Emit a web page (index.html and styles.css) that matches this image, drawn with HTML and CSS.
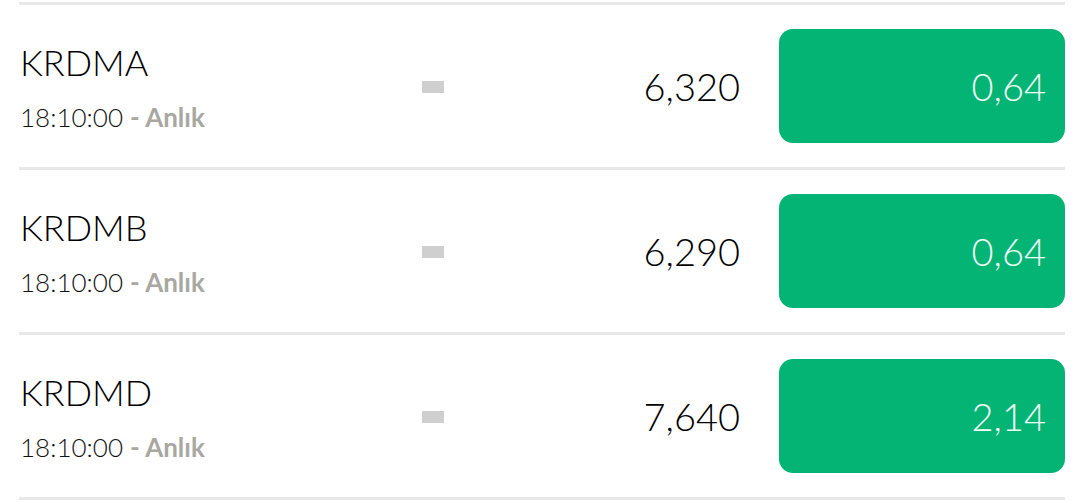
FILE: index.html
```html
<!DOCTYPE html>
<html lang="tr">
<head>
    <meta charset="UTF-8">
    <meta name="viewport" content="width=device-width, initial-scale=1.0">
    <title>Hisseler</title>
    <link rel="stylesheet" href="styles.css">
</head>
<body>
    <div class="liste">
        <div class="satir">
            <div class="bilgi">
                <div class="kod">KRDMA</div>
                <div class="zaman">18:10:00 <span class="tip">- Anlık</span></div>
            </div>
            <div class="degisim-yok"></div>
            <div class="fiyat">6,320</div>
            <div class="kutu yukari">0,64</div>
        </div>

        <div class="satir">
            <div class="bilgi">
                <div class="kod">KRDMB</div>
                <div class="zaman">18:10:00 <span class="tip">- Anlık</span></div>
            </div>
            <div class="degisim-yok"></div>
            <div class="fiyat">6,290</div>
            <div class="kutu yukari">0,64</div>
        </div>

        <div class="satir">
            <div class="bilgi">
                <div class="kod">KRDMD</div>
                <div class="zaman">18:10:00 <span class="tip">- Anlık</span></div>
            </div>
            <div class="degisim-yok"></div>
            <div class="fiyat">7,640</div>
            <div class="kutu yukari">2,14</div>
        </div>
    </div>
</body>
</html>
```

FILE: styles.css
```css
body {
    margin: 0;
    padding-top: 2px;
    background: #ffffff;
    font-family: Lato, "Noto Sans", sans-serif;
    font-weight: 300;
    color: #111;
}

.liste {
    margin: 0 15px 0 19px;
    border-bottom: 3px solid #e8e8e8;
}

.satir {
    display: flex;
    align-items: center;
    height: 162px;
    border-top: 3px solid #e8e8e8;
}

.bilgi {
    width: 402px;
    padding-left: 1px;
}

.kod {
    font-size: 36px;
    line-height: 44px;
    color: #000;
}

.zaman {
    margin-top: 18px;
    font-size: 26px;
    line-height: 30px;
    color: #111;
}

.tip {
    color: #a9a7a1;
    font-weight: bold;
}

.degisim-yok {
    width: 22px;
    height: 12px;
    background: #cfcfcf;
    margin-top: 2px;
}

.fiyat {
    flex: 1;
    text-align: right;
    font-size: 38px;
    color: #000;
}

.kutu {
    box-sizing: border-box;
    width: 286px;
    height: 114px;
    margin-left: 39px;
    padding-right: 19px;
    border-radius: 14px;
    display: flex;
    align-items: center;
    justify-content: flex-end;
    font-size: 38px;
    color: #effff6;
}

.yukari {
    background: #03b474;
}
```
